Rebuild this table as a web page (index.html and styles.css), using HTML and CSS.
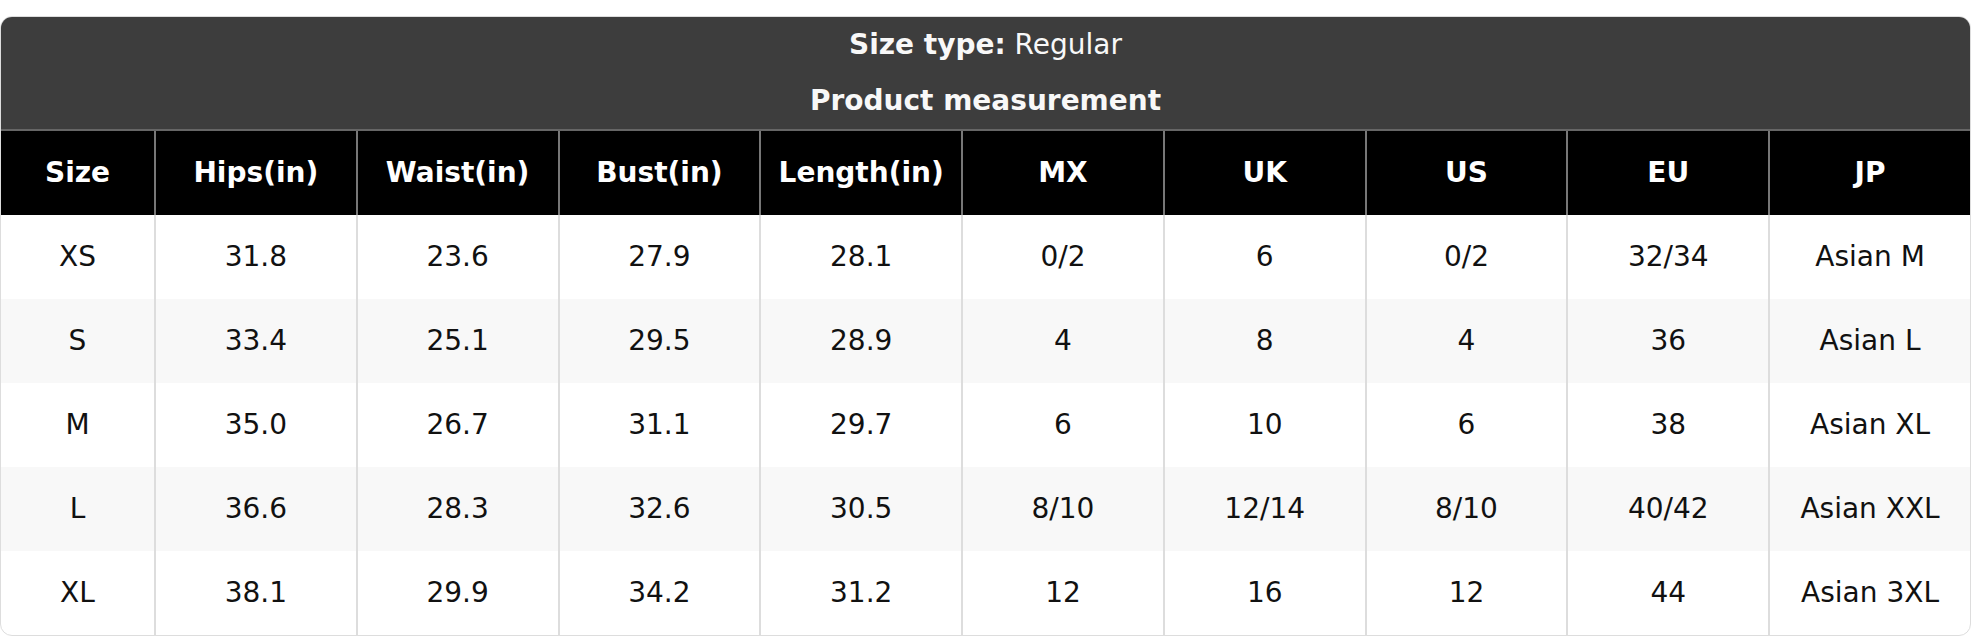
FILE: index.html
```html
<!DOCTYPE html>
<html lang="en">
<head>
<meta charset="utf-8">
<title>Size chart</title>
<link rel="stylesheet" href="styles.css">
</head>
<body>
<div class="chart">
  <div class="chart-title">
    <div class="title-line"><strong>Size type:</strong> Regular</div>
    <div class="title-line title-bold">Product measurement</div>
  </div>
  <table class="size-table">
    <colgroup>
      <col class="col-size">
      <col><col><col><col><col><col><col><col><col>
    </colgroup>
    <thead>
      <tr>
        <th>Size</th><th>Hips(in)</th><th>Waist(in)</th><th>Bust(in)</th><th>Length(in)</th>
        <th>MX</th><th>UK</th><th>US</th><th>EU</th><th>JP</th>
      </tr>
    </thead>
    <tbody>
      <tr><td>XS</td><td>31.8</td><td>23.6</td><td>27.9</td><td>28.1</td><td>0/2</td><td>6</td><td>0/2</td><td>32/34</td><td>Asian M</td></tr>
      <tr><td>S</td><td>33.4</td><td>25.1</td><td>29.5</td><td>28.9</td><td>4</td><td>8</td><td>4</td><td>36</td><td>Asian L</td></tr>
      <tr><td>M</td><td>35.0</td><td>26.7</td><td>31.1</td><td>29.7</td><td>6</td><td>10</td><td>6</td><td>38</td><td>Asian XL</td></tr>
      <tr><td>L</td><td>36.6</td><td>28.3</td><td>32.6</td><td>30.5</td><td>8/10</td><td>12/14</td><td>8/10</td><td>40/42</td><td>Asian XXL</td></tr>
      <tr><td>XL</td><td>38.1</td><td>29.9</td><td>34.2</td><td>31.2</td><td>12</td><td>16</td><td>12</td><td>44</td><td>Asian 3XL</td></tr>
    </tbody>
  </table>
</div>
</body>
</html>
```
FILE: styles.css
```css
html, body {
  margin: 0;
  padding: 0;
  background: #ffffff;
}

body {
  font-family: "DejaVu Sans", "Liberation Sans", sans-serif;
  font-size: 28px;
  color: #111111;
}

.chart {
  margin-top: 16px;
  width: 1971px;
  box-sizing: border-box;
  border: 1px solid #dddddd;
  border-radius: 12px;
  overflow: hidden;
  background: #ffffff;
}

.chart-title {
  background: #3d3d3d;
  color: #f8f8f8;
  text-align: center;
  border-bottom: 2px solid #666666;
}

.title-line {
  line-height: 55px;
  height: 56px;
}

.title-line strong,
.title-bold {
  font-weight: bold;
}

.size-table {
  width: 100%;
  border-collapse: separate;
  border-spacing: 0;
  table-layout: fixed;
}

.col-size {
  width: 153px;
}

.size-table th,
.size-table td {
  text-align: center;
  vertical-align: middle;
  padding: 0 0 2px 0;
  white-space: nowrap;
  box-sizing: border-box;
}

.size-table th {
  background: #000000;
  color: #ffffff;
  font-weight: bold;
  height: 84px;
}

.size-table th + th {
  border-left: 2px solid #777777;
}

.size-table td {
  height: 84px;
  color: #111111;
}

.size-table td + td {
  border-left: 2px solid #dddddd;
}

.size-table tbody tr:nth-child(even) td {
  background: #f8f8f8;
}
```
